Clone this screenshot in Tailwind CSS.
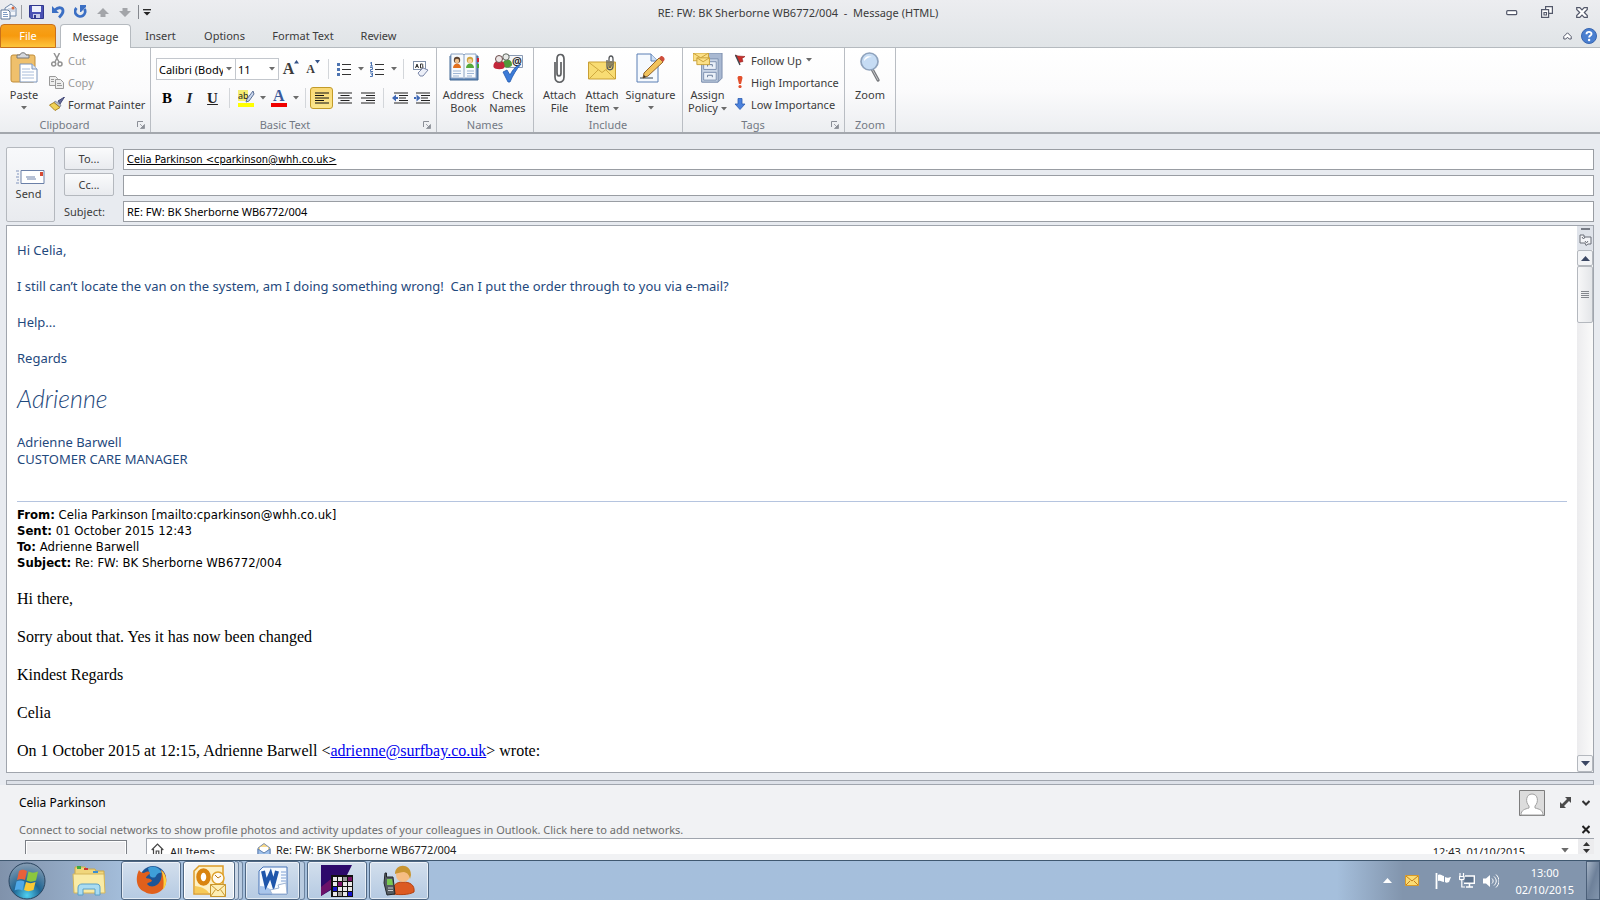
<!DOCTYPE html>
<html lang="en">
<head>
<meta charset="utf-8">
<meta name="viewport" content="width=device-width, initial-scale=1">
<title>RE: FW: BK Sherborne WB6772/004 - Message (HTML)</title>
<script src="https://cdn.jsdelivr.net/npm/@tailwindcss/browser@4"></script>
</head>
<body class="flex h-screen flex-col overflow-hidden bg-[#e8ebf0] font-['Noto_Sans',sans-serif] text-[11px] leading-[13px] text-[#3b3b3b]">

<svg class="hidden" aria-hidden="true">
  <symbol id="caret" viewBox="0 0 6 4"><path d="M0 0h6L3 3.5z" fill="#6b6b6b"/></symbol>
  <symbol id="launcher" viewBox="0 0 8 8"><path d="M.5 6V.5H6" fill="none" stroke="#8b8f97"/><path d="M3 3l3 3M7.500 3.500v4h-4z" fill="#8b8f97" stroke="#8b8f97" stroke-width=".8"/></symbol>
</svg>

<!-- Title bar -->
<header class="bg-linear-to-b from-[#ecedf0] to-[#e0e4e7]">
  <div class="flex h-6 items-center">
    <div class="flex flex-1 items-center">
      <svg class="h-[18px] w-[19px]" viewBox="0 0 19 18"><path d="M5 5l6-4 5 4v8H5z" fill="#f3f6fb" stroke="#6f87a8"/><path d="M8 6h7M8 8h7" stroke="#a9b9d0"/><circle cx="13" cy="5" r="1.500" fill="#d9653a"/><path d="M1 7h7l2 2v7H1z" fill="#fff" stroke="#5c7596"/><path d="M3 9.500h4M3 11.500h5M3 13.500h5" stroke="#7f9cc4"/></svg>
      <span class="ml-0.5 h-[14px] w-px bg-[#9a9da3]"></span>
      <button aria-label="Save" class="ml-[7px]"><svg class="h-[14px] w-[15px]" viewBox="0 0 15 14"><path d="M.5.5h14v13H2l-1.500-1.500z" fill="#4a52b4" stroke="#31388d"/><path d="M3 1h9v6H3z" fill="#eef1fb"/><path d="M4 9h7v4H4z" fill="#c9cdea"/><path d="M5 10h2v3H5z" fill="#31388d"/></svg></button>
      <button aria-label="Undo" class="ml-[8px]"><svg class="h-[14px] w-[13px]" viewBox="0 0 13 14"><path d="M0 1v7h7z" fill="#3b6fc4"/><path d="M3 5c4-4 8-2 8 1 0 3-2 4.500-4 6.500" fill="none" stroke="#3b6fc4" stroke-width="2.800"/></svg></button>
      <button aria-label="Repeat" class="ml-[9px]"><svg class="h-[14px] w-[13px]" viewBox="0 0 13 14"><path d="M2.500 3A5 5 0 1 0 10.500 4" fill="none" stroke="#3b6fc4" stroke-width="2.800"/><path d="M6 0v7h1l5-5V0z" fill="#3b6fc4"/></svg></button>
      <button aria-label="Previous item" class="ml-[10px]"><svg class="h-[9px] w-[12px]" viewBox="0 0 12 9"><path d="M6 0l6 6H8.500v3h-5V6H0z" fill="#a3a5a9"/></svg></button>
      <button aria-label="Next item" class="ml-[10px]"><svg class="h-[9px] w-[12px]" viewBox="0 0 12 9"><path d="M6 9l6-6H8.500V0h-5v3H0z" fill="#a3a5a9"/></svg></button>
      <span class="ml-[7px] h-[14px] w-px bg-[#85888e]"></span>
      <button aria-label="Customize Quick Access Toolbar" class="ml-1"><svg class="h-[7px] w-[8px]" viewBox="0 0 8 7"><path d="M0 .7h8" stroke="#222" stroke-width="1.300"/><path d="M.5 3h7L4 6.500z" fill="#222"/></svg></button>
    </div>
    <h1 class="whitespace-pre pl-2">RE: FW: BK Sherborne WB6772/004  -  Message (HTML)</h1>
    <div class="flex flex-1 items-center justify-end gap-[23px] pr-3">
      <button aria-label="Minimize"><svg class="h-[12px] w-[12px]" viewBox="0 0 12 12"><rect x=".7" y="4.700" width="10" height="4" rx="1" fill="#fff" stroke="#53586a" stroke-width="1.200"/></svg></button>
      <button aria-label="Restore Down"><svg class="h-[12px] w-[12px]" viewBox="0 0 12 12" fill="#fff" stroke="#53586a" stroke-width="1.200"><path d="M4.600.6h6.800v6.800H4.600z"/><path d="M.6 3.600h7v7.800h-7z"/><path d="M3 6.500h2.500V9H3z"/></svg></button>
      <button aria-label="Close"><svg class="h-[11px] w-[12px]" viewBox="0 0 12 11"><path d="M.7.7h3.100L6 3 8.200.7h3.100v1.800L8.300 5.500l3 3v1.800H8.200L6 8 3.800 10.300H.7V8.500l3-3-3-3z" fill="#fff" stroke="#53586a" stroke-width="1.200"/></svg></button>
    </div>
  </div>

  <!-- Ribbon tabs -->
  <nav class="flex h-6 items-center border-b border-[#b5babf]">
    <button class="h-6 w-14 rounded-t border border-[#c8701b] bg-linear-to-b from-[#f6a21c] via-[#f79a0d] to-[#fdc63b] text-white">File</button>
    <button class="ml-1 -mb-px h-6 w-[71px] rounded-t border border-b-0 border-[#b5babf] bg-white">Message</button>
    <button class="ml-[14px] w-[31px]">Insert</button>
    <button class="ml-[26px] w-[45px]">Options</button>
    <button class="ml-[25px] w-[62px] whitespace-nowrap">Format Text</button>
    <button class="ml-[22px] w-[45px]">Review</button>
    <div class="ml-auto flex items-center gap-[9px] pr-[3px]">
      <button aria-label="Minimize the Ribbon"><svg class="h-[8px] w-[9px]" viewBox="0 0 9 8"><path d="M4.500.8L.8 4.500V7h2l1.700-1.800L6.200 7h2V4.500z" fill="#fff" stroke="#53586a"/></svg></button>
      <button aria-label="Help"><svg class="h-4 w-4" viewBox="0 0 16 16"><circle cx="8" cy="8" r="7.500" fill="#4a7fd0" stroke="#3866b0"/><path d="M5.500 6.200C5.500 3 10.700 3.200 10.500 6c-.1 1.600-2.400 1.700-2.400 3.600" fill="none" stroke="#fff" stroke-width="1.900"/><circle cx="8.100" cy="12" r="1.200" fill="#fff"/></svg></button>
    </div>
  </nav>
</header>

<!-- Ribbon -->
<div class="flex h-[86px] shrink-0 border-b-2 border-[#a3a7ad] bg-linear-to-b from-white via-[#fbfbfc] to-[#eceef1]">
  <section aria-label="Clipboard" class="flex w-[151px] shrink-0 flex-col border-r border-[#b9bdc3]">
    <div class="flex h-[70px]">
      <button class="flex w-[48px] shrink-0 flex-col items-center pt-[4px]">
        <svg class="h-8 w-7" viewBox="0 0 28 32"><rect x="1" y="3" width="24" height="27" rx="2" fill="#efc06c" stroke="#c08d3a"/><path d="M7 6V3h3c0-3 6-3 6 0h3v3z" fill="#d5d8dd" stroke="#777"/><path d="M10 12h12l5 5v13H10z" fill="#fff" stroke="#7b94bb"/><path d="M22 12v5h5" fill="#dfe8f5" stroke="#7b94bb"/><path d="M12 17h8M12 20h12M12 23h12M12 26h12" stroke="#a8bcda"/></svg>
        <span class="mt-1">Paste</span>
        <svg class="mt-[5px] h-1 w-[6px]"><use href="#caret"/></svg>
      </button>
      <div class="flex flex-col items-start pt-px">
        <button class="flex h-[22px] items-center gap-[5px] pl-[3px] text-[#9a9a9a]"><svg class="h-[14px] w-[12px]" viewBox="0 0 12 14" fill="none" stroke="#929292"><path d="M3 0l5 9M8.500 0L4 9" stroke-width="1.500"/><circle cx="2.700" cy="11" r="2" stroke-width="1.500"/><circle cx="9" cy="11" r="2" stroke-width="1.500"/></svg>Cut</button>
        <button class="flex h-[22px] items-center gap-[4px] pl-px text-[#9a9a9a]"><svg class="h-[13px] w-[15px]" viewBox="0 0 15 13" fill="#eee" stroke="#999"><path d="M.5.500h6l2 2v7h-8z"/><path d="M6.500 3.500h5l3 3v6h-8z"/><path d="M8 7.500h4M8 9.500h5M2 3.500h3M2 5.500h3"/></svg>Copy</button>
        <button class="flex h-[22px] items-center gap-[3px] whitespace-nowrap pl-px"><svg class="h-[14px] w-[16px]" viewBox="0 0 16 14"><path d="M15.500 0L9 4l2 3z" fill="#666c9b" stroke="#444a78"/><path d="M6 4l6 4-1 2-6-4z" fill="#b9bfcc" stroke="#70788c" stroke-width=".7"/><path d="M5 5.500L.5 8l5.500 5.500 5-3z" fill="#f1d257" stroke="#a98324"/></svg>Format Painter</button>
      </div>
    </div>
    <div class="flex items-center pr-[5px] text-[#737984]"><span class="-mr-2 flex-1 pl-4 pr-8 text-center">Clipboard</span><button aria-label="Clipboard options"><svg class="h-[8px] w-[8px]"><use href="#launcher"/></svg></button></div>
  </section>

  <section aria-label="Basic Text" class="flex w-[286px] shrink-0 flex-col border-r border-[#b9bdc3]">
    <div class="flex h-[70px] flex-col gap-[7px] pl-[5px] pt-[10px]">
      <div class="flex h-[22px] items-center">
        <span class="relative"><select aria-label="Font" class="h-[22px] w-[80px] appearance-none overflow-hidden border border-[#c3c7cd] bg-white pl-[2px] pr-[12px] text-black"><option>Calibri (Body)</option></select><svg class="pointer-events-none absolute right-[4px] top-[9px] h-1 w-[6px]"><use href="#caret"/></svg></span>
        <span class="relative"><select aria-label="Font size" class="h-[22px] w-[43px] appearance-none border border-l-0 border-[#c3c7cd] bg-white pl-[2px] text-black"><option>11</option></select><svg class="pointer-events-none absolute right-[4px] top-[9px] h-1 w-[6px]"><use href="#caret"/></svg></span>
        <button aria-label="Grow Font" class="ml-px flex w-[22px] justify-center font-['Liberation_Serif',serif] text-[16px] font-bold leading-[18px]">A<svg class="h-[4px] w-[5px]" viewBox="0 0 5 4"><path d="M0 3.500h5L2.500 0z" fill="#345287"/></svg></button>
        <button aria-label="Shrink Font" class="flex w-[22px] justify-center font-['Liberation_Serif',serif] text-[12px] font-bold leading-[18px]">A<svg class="h-[4px] w-[5px]" viewBox="0 0 5 4"><path d="M0 0h5L2.500 3.500z" fill="#345287"/></svg></button>
        <span class="mx-1 h-5 w-px bg-[#d3d6da]"></span>
        <button aria-label="Bullets" class="flex w-[22px] justify-center"><svg class="h-[13px] w-[14px]" viewBox="0 0 14 13"><path d="M5 1.500h9M5 6.500h9M5 11.500h9" stroke="#333"/><path d="M0 0h3v3H0zM0 5h3v3H0zM0 10h3v3H0z" fill="#4e74b1"/></svg></button>
        <button aria-label="Bullet library" class="flex w-[11px] justify-center"><svg class="h-1 w-[6px]"><use href="#caret"/></svg></button>
        <button aria-label="Numbering" class="flex w-[22px] justify-center"><svg class="h-[15px] w-[14px]" viewBox="0 0 14 15"><path d="M5 2.500h9M5 7.500h9M5 12.500h9" stroke="#333"/><path d="M1.500 0v4M0 1h1.500M0 4h3M0 5.500h2.500v2H.5v2H3M0 11h2.500v3.500H0M1 12.700h1.500" fill="none" stroke="#4e74b1"/></svg></button>
        <button aria-label="Numbering library" class="flex w-[11px] justify-center"><svg class="h-1 w-[6px]"><use href="#caret"/></svg></button>
        <span class="ml-1 mr-[6px] h-5 w-px bg-[#d3d6da]"></span>
        <button aria-label="Clear Formatting" class="flex w-[22px] justify-center"><svg class="h-4 w-4" viewBox="0 0 16 16"><rect x=".5" y=".5" width="12" height="8" fill="#fff" stroke="#8090a8"/><path d="M2.500 7l1.500-4 1.500 4M3 5.500h2M7.500 3v4h1.700c1.300 0 1.300-2 0-2 1 0 1-2 0-2z" fill="none" stroke="#333"/><path d="M5 12l5-5 5 2-5 6H7z" fill="#eceff8" stroke="#7c88aa"/></svg></button>
      </div>
      <div class="flex h-[22px] items-center">
        <button aria-label="Bold" class="w-[22px] font-['Liberation_Serif',serif] text-[15px] font-bold leading-[22px] text-black">B</button>
        <button aria-label="Italic" class="w-[23px] font-['Liberation_Serif',serif] text-[15px] font-bold italic leading-[22px] text-[#222]">I</button>
        <button aria-label="Underline" class="w-[23px] font-['Liberation_Serif',serif] text-[15px] font-bold leading-[22px] text-[#222] underline">U</button>
        <span class="ml-[5px] mr-[5px] h-5 w-px bg-[#d3d6da]"></span>
        <button aria-label="Text Highlight Color" class="flex w-[22px] justify-center"><svg class="h-[18px] w-[17px]" viewBox="0 0 17 18"><path d="M0 1h10v11H0z" fill="#f4ee72"/><text x="0" y="10" font-family="Noto Sans" font-size="9" fill="#222">ab</text><path d="M15 2L9 10l-1 3 3-1 5-7z" fill="#c9d6ee" stroke="#5c7196"/><path d="M0 14h16v4H0z" fill="#ff0"/></svg></button>
        <button aria-label="Highlight colors" class="flex w-[11px] justify-center"><svg class="h-1 w-[6px]"><use href="#caret"/></svg></button>
        <button aria-label="Font Color" class="flex w-[22px] justify-center"><svg class="h-[18px] w-[16px]" viewBox="0 0 16 18"><text x="2" y="12" font-family="Liberation Serif" font-weight="bold" font-size="16" fill="#3b5a9b">A</text><path d="M0 14h16v4H0z" fill="#f00000"/></svg></button>
        <button aria-label="Font colors" class="flex w-[11px] justify-center"><svg class="h-1 w-[6px]"><use href="#caret"/></svg></button>
        <span class="mx-1 h-5 w-px bg-[#d3d6da]"></span>
        <button aria-label="Align Text Left" class="flex h-[22px] w-[23px] items-center justify-center rounded-[3px] border border-[#c29b29] bg-linear-to-b from-[#f9d875] to-[#fbe68b]"><svg class="h-[13px] w-[14px]" viewBox="0 0 14 13"><path d="M0 1h14M0 3.500h9M0 6h14M0 8.500h9M0 11h14" stroke="#111" stroke-width="1.200"/></svg></button>
        <button aria-label="Center" class="flex w-[23px] justify-center"><svg class="h-[13px] w-[14px]" viewBox="0 0 14 13"><path d="M0 1h14M2.500 3.500h9M0 6h14M2.500 8.500h9M0 11h14" stroke="#222" stroke-width="1.200"/></svg></button>
        <button aria-label="Align Text Right" class="flex w-[23px] justify-center"><svg class="h-[13px] w-[14px]" viewBox="0 0 14 13"><path d="M0 1h14M5 3.500h9M0 6h14M5 8.500h9M0 11h14" stroke="#222" stroke-width="1.200"/></svg></button>
        <span class="ml-1 mr-[5px] h-5 w-px bg-[#d3d6da]"></span>
        <button aria-label="Decrease Indent" class="flex w-[22px] justify-center"><svg class="h-[13px] w-4" viewBox="0 0 16 13"><path d="M2 1h14M7 3.500h9M7 6h7M7 8.500h9M2 11h14" stroke="#222" stroke-width="1.200"/><path d="M0 6l4-3.500v7zM3 5h3v2H3z" fill="#3f68b5"/></svg></button>
        <button aria-label="Increase Indent" class="flex w-[22px] justify-center"><svg class="h-[13px] w-4" viewBox="0 0 16 13"><path d="M2 1h14M7 3.500h9M7 6h7M7 8.500h9M2 11h14" stroke="#222" stroke-width="1.200"/><path d="M6.500 6l-4-3.500v7zM0 5h3v2H0z" fill="#3f68b5"/></svg></button>
      </div>
    </div>
    <div class="flex items-center pr-[5px] text-[#737984]"><span class="-mr-2 flex-1 pl-1 pr-4 text-center">Basic Text</span><button aria-label="Basic Text options"><svg class="h-[8px] w-[8px]"><use href="#launcher"/></svg></button></div>
  </section>

  <section aria-label="Names" class="flex w-[97px] shrink-0 flex-col border-r border-[#b9bdc3]">
    <div class="flex h-[70px] justify-center">
      <button class="flex w-[45px] flex-col items-center pt-[5px]">
        <svg class="h-[30px] w-[30px]" viewBox="0 0 30 30"><path d="M1 3h28v24H1z" fill="#5f86b8" stroke="#426994"/><path d="M2 1h12l1 1 1-1h11v24H16l-1 1-1-1H2z" fill="#f7fafd" stroke="#8aa2c2"/><path d="M15 2v23" stroke="#8aa2c2"/><path d="M4 18h8M4 20.500h8M4 23h6M18 18h7M18 20.500h7M18 23h5" stroke="#9fb6d4"/><path d="M4 15c0-6 8-6 8 0z" fill="#e2701e"/><circle cx="8" cy="7" r="3.200" fill="#5b4332"/><circle cx="8" cy="8" r="2.200" fill="#efc08c"/><path d="M17 15c0-6 8-6 8 0z" fill="#55a83a"/><circle cx="21" cy="7" r="3.200" fill="#d1a53f"/><circle cx="21" cy="8" r="2.200" fill="#f4cf9e"/><path d="M28 5h2v4h-2z" fill="#c23"/><path d="M28 11h2v4h-2z" fill="#4a3"/></svg>
        <span class="mt-[5px]">Address<br>Book</span>
      </button>
      <button class="flex w-[43px] flex-col items-center pt-[5px]">
        <svg class="h-[30px] w-[30px]" viewBox="0 0 30 30"><path d="M13 2.500h16.500v12H13z" fill="#f4f7fb" stroke="#8b9ab3"/><path d="M9.500 13c-1-8 10-9 9.500-1 0 2-6 4-9.500 1z" fill="#4f9a3a"/><circle cx="13" cy="4" r="3.200" fill="#e8eae8" stroke="#5e665e"/><path d="M.5 14c-1-8 12-9 11 0 0 3-10 3-11 0z" fill="#c2273a"/><circle cx="6" cy="6" r="3.500" fill="#ece6e6" stroke="#6b4b4b"/><text x="19" y="12" font-family="Noto Sans" font-size="11" font-weight="bold" fill="#333">@</text><path d="M10 19l4-2 3 5c3-6 6-9 11-11-5 6-8 11-11 18h-2z" fill="#3c7bd8" stroke="#2259ad" stroke-width=".8"/></svg>
        <span class="mt-[5px]">Check<br>Names</span>
      </button>
    </div>
    <div class="text-center text-[#737984]">Names</div>
  </section>

  <section aria-label="Include" class="flex w-[149px] shrink-0 flex-col border-r border-[#b9bdc3]">
    <div class="flex h-[70px] justify-center">
      <button class="flex w-[42px] flex-col items-center pt-[5px]">
        <svg class="h-[31px] w-[13px]" viewBox="0 0 13 31"><path d="M2 9v15c0 7 9 7 9 0V6c0-6-7-6-7 0v14c0 4 4 4 4 0V9" fill="none" stroke="#5e6063" stroke-width="1.700"/></svg>
        <span class="mt-1">Attach<br>File</span>
      </button>
      <button class="flex w-[43px] flex-col items-center pt-[5px]">
        <svg class="h-[30px] w-[28px]" viewBox="0 0 28 30"><path d="M.5 9h27v17H.5z" fill="#f8dc73" stroke="#c99f35"/><path d="M1 9.500l13 10 13-10M1 26l9-9M27 26l-9-9" fill="none" stroke="#cfa83f"/><path d="M19 7v6c0 5 6 5 6 0V6c0-4-4-4-4 0v7c0 2 2 2 2 0V8" fill="none" stroke="#55585c" stroke-width="1.300"/></svg>
        <span class="mt-[5px]">Attach<br>Item<svg class="ml-[3px] inline h-1 w-[6px]"><use href="#caret"/></svg></span>
      </button>
      <button class="flex w-[54px] flex-col items-center pt-[5px]">
        <svg class="h-[30px] w-[29px]" viewBox="0 0 29 30"><path d="M1 1h14l7 7v21H1z" fill="#f5f9fe" stroke="#5b7fb4"/><path d="M15 1v7h7" fill="#cfdff3" stroke="#5b7fb4"/><path d="M4 25h13" stroke="#345"/><path d="M23 5l4 4-15 14-5 2 1-5z" fill="#f2c35c" stroke="#93642a"/><path d="M23 5l2-2c2 0 4 2 3.500 4L27 9z" fill="#cf4d3c"/><path d="M7 25l1-3 2 2z" fill="#333"/></svg>
        <span class="mt-[5px]">Signature</span>
        <svg class="mt-[5px] h-1 w-[6px]"><use href="#caret"/></svg>
      </button>
    </div>
    <div class="text-center text-[#737984]">Include</div>
  </section>

  <section aria-label="Tags" class="flex w-[162px] shrink-0 flex-col border-r border-[#b9bdc3]">
    <div class="flex h-[70px]">
      <button class="flex w-[49px] shrink-0 flex-col items-center pt-[5px]">
        <svg class="h-[30px] w-[30px]" viewBox="0 0 31 31"><path d="M11 1l3-1h16v26l-4 4H9V8z" fill="#a9b9d2" stroke="#7b8dab"/><path d="M9 6h17v24H9z" fill="#c9d5e6" stroke="#8093b1"/><path d="M11 9h13v8H11zM11 20h13v8H11z" fill="#eaf0f8" stroke="#7c90b0"/><path d="M15 14v-2h5v2M15 25v-2h5v2" fill="none" stroke="#6b7d9b"/><path d="M0 0h16v8H0z" fill="#fbe088" stroke="#c9a13a"/><path d="M0 0l8 5 8-5" fill="none" stroke="#c9a13a"/><path d="M4 5h13v7H4z" fill="#fbe088" stroke="#c9a13a"/><path d="M4 5l6.500 4L17 5" fill="none" stroke="#c9a13a"/></svg>
        <span class="mt-[5px] whitespace-nowrap">Assign<br>Policy<svg class="ml-[3px] inline h-1 w-[6px]"><use href="#caret"/></svg></span>
      </button>
      <div class="flex flex-col items-start whitespace-nowrap pl-0.5 pt-px">
        <button class="flex h-[22px] items-center"><svg class="mr-[5px] h-3 w-3" viewBox="0 0 12 12"><path d="M1 1l3 1 7 .5-3 2 1 3-4 1" fill="#c9302c" stroke="#8e1a1a" stroke-width=".6"/><path d="M1.500 1L6 11" stroke="#41484f" stroke-width="1.400"/></svg>Follow Up<svg class="ml-1 h-1 w-[6px]"><use href="#caret"/></svg></button>
        <button class="flex h-[22px] items-center"><svg class="mr-[5px] h-3 w-3" viewBox="0 0 12 12"><path d="M3.500 2c0-3 5-3 5 0L7 8H5z" fill="#e2502d"/><circle cx="6" cy="10.500" r="1.600" fill="#e2502d"/></svg>High Importance</button>
        <button class="flex h-[22px] items-center"><svg class="mr-[5px] h-3 w-3" viewBox="0 0 12 12"><path d="M4 .5h4V6h3l-5 5.500L1 6h3z" fill="#4b82dd" stroke="#2c5cb0" stroke-width=".8"/></svg>Low Importance</button>
      </div>
    </div>
    <div class="flex items-center pr-[5px] text-[#737984]"><span class="flex-1 pr-2 text-center">Tags</span><button aria-label="Tags options"><svg class="h-[8px] w-[8px]"><use href="#launcher"/></svg></button></div>
  </section>

  <section aria-label="Zoom" class="flex w-[51px] shrink-0 flex-col border-r border-[#b9bdc3]">
    <button class="flex h-[70px] flex-col items-center pt-[4px]">
      <svg class="h-[31px] w-[20px]" viewBox="0 0 20 31"><path d="M12 17l6 11" stroke="#77797d" stroke-width="3.200" stroke-linecap="round"/><path d="M12 17l6 11" stroke="#c5c7ca" stroke-width="1"/><circle cx="9.500" cy="9.500" r="8.500" fill="#c6dcf4" stroke="#8fa3bd" stroke-width="1.700"/><path d="M4 9c0-4 4-6 8-4-4 0-6 2-8 4z" fill="#fff"/></svg>
      <span class="mt-[5px]">Zoom</span>
    </button>
    <div class="text-center text-[#737984]">Zoom</div>
  </section>
</div>

<main class="flex min-h-0 flex-1 flex-col pt-[13px]">
  <!-- Address fields -->
  <form class="flex gap-[9px] px-[6px]">
    <button type="button" class="flex w-[49px] flex-col items-center justify-center gap-[3px] rounded-[2px] border border-[#b4b8be] bg-linear-to-b from-[#f8f9fb] to-[#e9ebef]">
      <svg class="h-[14px] w-[29px]" viewBox="0 0 29 14"><path d="M0 1h3M1 4h2M0 7h3M1 10h2M0 13h3" stroke="#8094bd"/><path d="M5 .5h23v13H5z" fill="#fff" stroke="#6b80a8"/><path d="M10 7h9M11 9h9" stroke="#6f83ab"/><path d="M24 2h3v4h-3z" fill="#d64a34"/></svg>
      <span class="mr-1">Send</span>
    </button>
    <div class="grid flex-1 auto-rows-[23px] grid-cols-[50px_1fr] items-end gap-x-[9px] gap-y-[3px]">
      <button type="button" class="h-[23px] rounded-[2px] border border-[#b4b8be] bg-linear-to-b from-[#fafbfc] to-[#e9ebef]">To...</button>
      <input aria-label="To" value="Celia Parkinson &lt;cparkinson@whh.co.uk&gt;" class="h-[21px] border border-[#999da3] bg-white px-[3px] font-['DejaVu_Sans_Condensed','DejaVu_Sans',sans-serif] text-[11px] text-black underline">
      <button type="button" class="h-[23px] rounded-[2px] border border-[#b4b8be] bg-linear-to-b from-[#fafbfc] to-[#e9ebef]">Cc...</button>
      <input aria-label="Cc" class="h-[21px] border border-[#999da3] bg-white px-[3px]">
      <label for="subject" class="leading-[21px]">Subject:</label>
      <input id="subject" value="RE: FW: BK Sherborne WB6772/004" class="h-[21px] border border-[#999da3] bg-white px-[3px] text-black">
    </div>
  </form>

  <!-- Message body -->
  <div class="mx-[6px] mt-[3px] flex min-h-0 flex-1 border border-[#a0a5ad] bg-white">
    <article class="min-w-0 flex-1 overflow-hidden pl-[10px] pr-[10px] pt-[15px] text-black">
      <div class="flex flex-col gap-[18px] text-[13px] leading-[18px] text-[#1f497d]">
        <p>Hi Celia,</p>
        <p class="whitespace-pre">I still can’t locate the van on the system, am I doing something wrong!  Can I put the order through to you via e-mail?</p>
        <p>Help...</p>
        <p>Regards</p>
      </div>
      <p class="mt-[18px] font-['Bradley_Hand_ITC','Lato',cursive] text-[25px] font-light italic leading-[26px] text-[#1f497d]">Adrienne</p>
      <p class="mt-[23px] text-[13px] leading-[17px] text-[#1f497d]">Adrienne Barwell<br>CUSTOMER CARE MANAGER</p>
      <hr class="mt-[33px] border-[#b5c4df]">
      <p class="mt-[5px] font-['DejaVu_Sans_Condensed','DejaVu_Sans',sans-serif] text-[13px] leading-[16px]"><b>From:</b> Celia Parkinson [mailto:cparkinson@whh.co.uk]<br><b>Sent:</b> 01 October 2015 12:43<br><b>To:</b> Adrienne Barwell<br><b>Subject:</b> Re: FW: BK Sherborne WB6772/004</p>
      <div class="mt-[18px] flex flex-col gap-[19px] font-['Liberation_Serif',serif] text-[16px] leading-[19px]">
        <p>Hi there,</p>
        <p>Sorry about that. Yes it has now been changed</p>
        <p>Kindest Regards</p>
        <p>Celia</p>
        <p>On 1 October 2015 at 12:15, Adrienne Barwell &lt;<a href="mailto:adrienne@surfbay.co.uk" class="text-[#0000ee] underline">adrienne@surfbay.co.uk</a>&gt; wrote:</p>
      </div>
    </article>
    <div class="flex w-4 flex-col bg-linear-to-r from-[#ececee] to-[#fafafa]" aria-label="Scroll bar">
      <div class="flex h-6 flex-col items-center gap-1 bg-[#dfe3ea] pt-[2px]">
        <span class="h-[2px] w-[9px] bg-[#777c86]"></span>
        <button aria-label="Select browse object"><svg class="h-[12px] w-[13px]" viewBox="0 0 13 12"><path d="M1 1h4v2h7v7H9l-2 1.500L6 9H1z" fill="#f4f5f8" stroke="#6b6f79"/><path d="M3 3l1.500 2L6 3M6 7l1.500 2L9 7" fill="none" stroke="#6b6f79"/></svg></button>
      </div>
      <button aria-label="Scroll up" class="flex h-4 items-center justify-center rounded-[2px] border border-[#b4b8be] bg-[#f3f4f6]"><svg class="h-[5px] w-[9px]" viewBox="0 0 9 5"><path d="M0 5h9L4.500 0z" fill="#3b4763"/></svg></button>
      <div class="flex h-[57px] flex-col items-center justify-center gap-px rounded-[2px] border border-[#b4b8be] bg-linear-to-r from-[#f7f7f8] to-[#e4e6e9]">
        <span class="h-px w-2 bg-[#84878d]"></span><span class="h-px w-2 bg-[#84878d]"></span><span class="h-px w-2 bg-[#84878d]"></span><span class="h-px w-2 bg-[#84878d]"></span>
      </div>
      <button aria-label="Scroll down" class="mt-auto flex h-[17px] items-center justify-center rounded-[2px] border border-[#b4b8be] bg-[#f3f4f6]"><svg class="h-[5px] w-[9px]" viewBox="0 0 9 5"><path d="M0 0h9L4.500 5z" fill="#3b4763"/></svg></button>
    </div>
  </div>
  <div class="mx-[6px] mt-[7px] h-[5px] shrink-0 border border-[#a0a5ad] bg-[#dde1e8]"></div>

  <!-- People pane -->
  <section aria-label="People pane" class="flex h-[75px] shrink-0 flex-col bg-[#f1f2f4] pb-[6px]">
    <div class="flex h-[35px] items-center pl-[19px] pr-[10px] text-[12px] text-black">
      <span class="flex-1">Celia Parkinson</span>
      <svg class="h-[26px] w-[26px]" viewBox="0 0 26 26"><path d="M.5.5h25v25H.5z" fill="#dcdcdc" stroke="#7d7d7d"/><path d="M2 25c0-5 4-6 8-7v-2C6 12 7 4 13 4s7 8 3 12v2c4 1 8 2 8 7z" fill="#fff" stroke="#a0a0a0"/></svg>
      <button aria-label="Expand" class="ml-[15px]"><svg class="h-[11px] w-[11px]" viewBox="0 0 11 11"><path d="M5 0h6v6L9 4 4 9l2 2H0V5l2 2 5-5z" fill="#4b4b4b"/></svg></button>
      <button aria-label="Collapse" class="ml-[11px]"><svg class="h-[6px] w-[8px]" viewBox="0 0 8 6"><path d="M.5 1L4 4.500 7.500 1" fill="none" stroke="#333" stroke-width="2"/></svg></button>
    </div>
    <div class="flex h-[18px] items-center pl-[19px] pr-[10px] text-[#6d6d6d]">
      <span class="flex-1">Connect to social networks to show profile photos and activity updates of your colleagues in Outlook. Click here to add networks.</span>
      <button aria-label="Close"><svg class="h-[9px] w-[8px]" viewBox="0 0 8 9"><path d="M.5 1l7 7M7.500 1l-7 7" stroke="#222" stroke-width="2"/></svg></button>
    </div>
    <div class="flex min-h-0 flex-1 overflow-hidden pr-[6px]">
      <div class="ml-[25px] mt-[2px] h-[40px] w-[102px] shrink-0 border border-[#7b7f85] bg-[#ececee] ring-1 ring-inset ring-white"></div>
      <div class="ml-[19px] flex h-[30px] flex-1 items-start border-l border-t border-[#a0a5ad] bg-white pt-[4px] text-[#222]">
        <svg class="ml-1 h-[13px] w-[13px]" viewBox="0 0 13 13"><path d="M.7 7L6.500 1l5.800 6M2.500 6v6h2.700V8h2.600v4h2.700V6" fill="none" stroke="#444" stroke-width="1.200"/></svg>
        <a href="#all" class="ml-[6px] w-[87px] pt-[2px]">All Items</a>
        <svg class="h-[14px] w-[14px]" viewBox="0 0 14 14"><path d="M1 5l6-4.500L13 5v8H1z" fill="#f7d98a" stroke="#7d8fae"/><path d="M3 4h8v5H3z" fill="#fff"/><path d="M1 6l6 4 6-4v7H1z" fill="#9ec0ea" stroke="#5d7fb2"/></svg>
        <a href="#message" class="ml-[5px] flex-1">Re: FW: BK Sherborne WB6772/004</a>
        <span class="pt-[2px]">12:43&nbsp; 01/10/2015</span>
        <svg class="ml-9 mr-[9px] mt-[5px] h-[5px] w-[8px]"><use href="#caret"/></svg>
        <div class="-mt-1 flex h-6 w-4 flex-col items-center gap-[3px] bg-[#ececee] pt-[3px]">
          <svg class="h-1 w-[7px]" viewBox="0 0 7 4"><path d="M0 4h7L3.500 0z" fill="#333"/></svg>
          <svg class="h-1 w-[7px]" viewBox="0 0 7 4"><path d="M0 0h7L3.500 4z" fill="#333"/></svg>
        </div>
      </div>
    </div>
  </section>
</main>

<!-- Taskbar -->
<footer class="flex h-10 shrink-0 border-t border-[#3f5870] bg-linear-to-r from-[#8092ab] from-0% via-[#a5bfdc] via-8% to-[#a5bfdc]">
  <button aria-label="Start" class="ml-2 self-center"><svg class="h-[38px] w-[38px]" viewBox="0 0 38 38"><defs><radialGradient id="orb" cx=".5" cy=".9" r=".85"><stop offset="0" stop-color="#4fd0f0"/><stop offset=".45" stop-color="#1f6593"/><stop offset="1" stop-color="#7f98b0"/></radialGradient></defs><circle cx="19" cy="19" r="18" fill="url(#orb)" stroke="#2b4560"/><path d="M11 9c3-2 5-1.500 8 0l-2 9c-3-1.500-5-1.500-8 0z" fill="#e8603a"/><path d="M20.500 9.500c3 1.500 6 1.500 9.500 0l-2 9c-4 1.500-6.500 1.500-9.500 0z" fill="#8cc63e"/><path d="M8.500 19.500c3-1.500 5-1.500 8 0l-2 9c-3-1.500-5-1.500-8 0z" fill="#4fa8e8"/><path d="M18 20c3 1.500 6 1.500 9.500 0l-2 8c-4 1.500-6.500 1.500-9.500 0z" fill="#fbc935"/></svg></button>
  <button aria-label="Windows Explorer" class="ml-[26px] self-center"><svg class="h-[32px] w-[34px]" viewBox="0 0 34 32"><path d="M3 4V2h10l2 2h8l1 2h8v20H3z" fill="#f0d67c" stroke="#caa84a"/><path d="M5 1h4v3H5z" fill="#3faa3f"/><path d="M12 3h4v2h-4z" fill="#c33"/><path d="M21 6h5v2h-5z" fill="#3c8fd0"/><path d="M1 9h31l1 19H2z" fill="#f9eba6" stroke="#d5b65a"/><path d="M6 30v-7c0-3 2-4 4-4h14c3 0 4 1 4 4v7h-5v-6H11v6z" fill="#a9dcf2" stroke="#5ba0c8"/></svg></button>
  <button aria-label="Firefox" class="ml-[15px] flex w-[60px] items-center justify-center rounded-[3px] border border-[#4f6783] bg-linear-to-b from-[#d3dfed] to-[#b5cae2] ring-1 ring-inset ring-white/60"><svg class="h-[31px] w-[31px]" viewBox="0 0 31 31"><circle cx="17" cy="14" r="13" fill="#1d5596"/><path d="M12 3c6-3 12 0 14 5-3-1-5 1-6 3s-4 2-6 0z" fill="#3f9fd8"/><path d="M3 5c1 2 3 3 5 3 3-2 5-2 6 0-1 2-4 3-4 5 2 1 5 0 6 3-2 2-4 1-5 3 4 5 12 2 14-5 1-4 1-7 0-9 5 3 6 9 5 13-2 9-13 14-21 9C0 24-1 13 3 5z" fill="#e0601c"/><path d="M25 5c6 5 7 14 2 20 1-6 1-14-2-20z" fill="#fcd13f"/></svg></button>
  <div class="ml-[2px] flex">
    <button aria-label="Outlook" class="flex w-[52px] items-center justify-center rounded-[3px] border border-[#4f6783] bg-linear-to-b from-[#f2f5f8] to-[#dce6f1] ring-1 ring-inset ring-white"><svg class="h-[32px] w-[33px]" viewBox="0 0 33 32"><path d="M6 1h24v28H1V6z" fill="#fdf0c4" stroke="#dd9c27" stroke-width="1.500"/><path d="M2 21c8 1 12 4 14 7H2z" fill="#f7ca58"/><ellipse cx="10.500" cy="12" rx="5" ry="6.500" fill="#fff" stroke="#d98410" stroke-width="4.500"/><circle cx="25" cy="13" r="6" fill="#fffaf0" stroke="#e0a32b" stroke-width="1.500"/><path d="M22 10l3 3 3-2" fill="none" stroke="#b97a1a"/><path d="M17.500 19.500h15v12h-15z" fill="#fdeeb4" stroke="#c8962e"/><path d="M17.500 19.500L25 26l7.500-6.500M17.500 31.500l5-7M32.500 31.500l-5-7" fill="none" stroke="#c8962e"/></svg></button>
    <span class="w-1 rounded-r-[3px] border border-l-0 border-[#6d84a0] bg-[#c9d6e6]"></span><span class="w-1 rounded-r-[3px] border border-l-0 border-[#6d84a0] bg-[#b9cbe0]"></span>
  </div>
  <div class="ml-[2px] flex">
    <button aria-label="Word" class="flex w-[55px] items-center justify-center rounded-[3px] border border-[#4f6783] bg-linear-to-b from-[#d3dfed] to-[#b5cae2] ring-1 ring-inset ring-white/60"><svg class="h-[30px] w-[30px]" viewBox="0 0 30 30"><path d="M5 1h24v27H1V5z" fill="#f6fafe" stroke="#4472b8"/><path d="M23 6h5M23 9h5M23 12h5M23 15h5" stroke="#7fa0d4"/><path d="M2 20c8 0 12 4 13 7H2z" fill="#a9c6ec"/><path d="M5 5l3 13L12.500 8l3 10L19 5" fill="none" stroke="#1f56ab" stroke-width="4"/><path d="M12 24l9-2-1-3 8-2 1 11H14z" fill="#fff" stroke="#9db3d3"/></svg></button>
    <span class="w-[5px] rounded-r-[3px] border border-l-0 border-[#6d84a0] bg-[#b9cbe0]"></span>
  </div>
  <button aria-label="Crossword" class="ml-[2px] flex w-[60px] items-center justify-center rounded-[3px] border border-[#4f6783] bg-linear-to-b from-[#d3dfed] to-[#b5cae2] ring-1 ring-inset ring-white/60"><svg class="h-[32px] w-[32px]" viewBox="0 0 32 32"><path d="M0 0h31l-5 10H10v15L0 31z" fill="#2d0a6b"/><path d="M0 22l10-8v10L0 31z" fill="#6b1169"/><path d="M10 10h22v22H10z" fill="#111"/><path d="M12 12h4v4h-4zM17 12h4v4h-4zM22 17h4v4h-4zM12 17h4v4h-4zM27 17h4v4h-4zM17 22h4v4h-4zM22 22h4v4h-4zM12 27h4v4h-4zM22 27h4v4h-4zM27 22h4v4h-4z" fill="#e8e8e8"/><path d="M22 12h4v4h-4zM17 27h4v4h-4z" fill="#999"/><path d="M27 12h4v4h-4zM17 17h4v4h-4z" fill="#7b1169"/><path d="M12 22h4v4h-4zM27 27h4v4h-4z" fill="#1717c9"/></svg></button>
  <button aria-label="Contacts phone" class="ml-[2px] flex w-[60px] items-center justify-center rounded-[3px] border border-[#4f6783] bg-linear-to-b from-[#d3dfed] to-[#b5cae2] ring-1 ring-inset ring-white/60"><svg class="h-[32px] w-[32px]" viewBox="0 0 32 32"><path d="M10 29c-1-9 3-12 10-12s12 3 11 10c-5 3-15 3-21 2z" fill="#dc5a22" stroke="#b3400f"/><circle cx="20" cy="10" r="7" fill="#f6bd83"/><path d="M12 9c0-11 16-11 16 1l-1 4c-1-4-2-6-6-7-3 0-6 1-9 2z" fill="#c99531"/><path d="M2 8h1.500v4H10l2 17-8 1-3-12z" fill="#565c61" stroke="#23272b"/><path d="M4 14h5l1 6H4z" fill="#77c850"/><path d="M5 23h5M5 25.500h5" stroke="#c8ccd0"/></svg></button>

  <div class="ml-auto flex items-center bg-linear-to-r from-[#8295ad]/0 to-[#8295ad] to-25% pl-[46px] text-white">
    <button aria-label="Show hidden icons"><svg class="h-[5px] w-[9px]" viewBox="0 0 9 5"><path d="M0 5h9L4.500 0z" fill="#fff"/></svg></button>
    <svg class="ml-[13px] h-[11px] w-[14px]" viewBox="0 0 14 11"><path d="M.5.5h13v10H.5z" fill="#fbdc74" stroke="#d89a2a"/><path d="M1 1l6 5 6-5M1 10l4-4M13 10L9 6" fill="none" stroke="#c27d1f"/></svg>
    <svg class="ml-4 h-[16px] w-[16px]" viewBox="0 0 16 16"><path d="M1.500 0v16" stroke="#fff" stroke-width="1.800"/><path d="M3 2c3-1.500 4 1 6 1v6C7 9 6 7 3 8z" fill="#fff"/><path d="M10 4c2 1 3 1 6 0l-2 5c-2 1-3 1-4 0z" fill="#fff"/></svg>
    <svg class="ml-2 h-[15px] w-[16px]" viewBox="0 0 16 15"><path d="M6 3h9.300v7.300H5" fill="#5e738d" stroke="#fff" stroke-width="1.400"/><path d="M7 14h7M10.500 10v4" stroke="#fff" stroke-width="1.500"/><path d="M1 0v3M4.500 0v3M.5 3.500H5V6c0 1-4.500 1-4.500 0zM2.800 6v8H6" fill="none" stroke="#fff" stroke-width="1.200"/></svg>
    <svg class="ml-2 h-[14px] w-[16px]" viewBox="0 0 16 14"><path d="M0 4.500h3L7 1v12L3 9.500H0z" fill="#fff"/><path d="M9 4.500c1.500 1.500 1.500 3.500 0 5M11 2.500c3 3 3 6 0 9M13 .5c4 4 4 9 0 13" fill="none" stroke="#fff"/></svg>
    <time datetime="2015-10-02T13:00" class="ml-4 text-center leading-[17px]">13:00<br>02/10/2015</time>
    <button aria-label="Show desktop" class="ml-3 h-full w-[14px] border border-[#4b5f78] bg-linear-to-br from-[#a7b5c6] via-[#6e819a] to-[#8295ad]"></button>
  </div>
</footer>
</body>
</html>
